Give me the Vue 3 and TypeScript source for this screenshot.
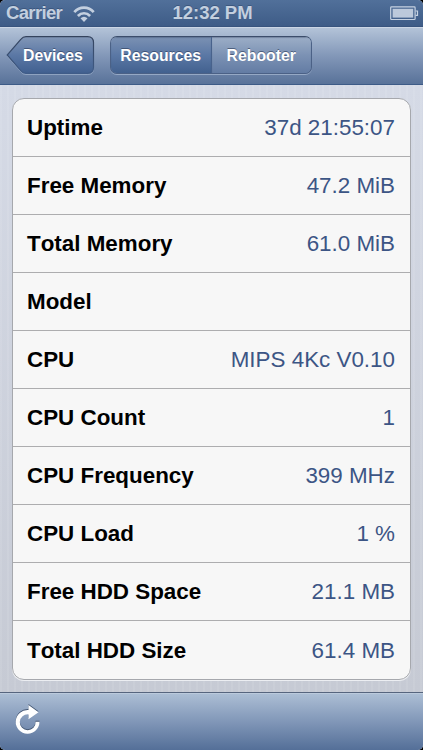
<script setup lang="ts">
import { ref } from 'vue'

interface Row {
  label: string
  value: string
}

const rows: Row[] = [
  { label: 'Uptime', value: '37d 21:55:07' },
  { label: 'Free Memory', value: '47.2 MiB' },
  { label: 'Total Memory', value: '61.0 MiB' },
  { label: 'Model', value: '' },
  { label: 'CPU', value: 'MIPS 4Kc V0.10' },
  { label: 'CPU Count', value: '1' },
  { label: 'CPU Frequency', value: '399 MHz' },
  { label: 'CPU Load', value: '1 %' },
  { label: 'Free HDD Space', value: '21.1 MB' },
  { label: 'Total HDD Size', value: '61.4 MB' },
]

const tabs = ['Resources', 'Rebooter']
const active = ref('Resources')
</script>

<template>
  <div class="screen">
    <header class="status">
      <div class="carrier">
        <span class="carrier-name">Carrier</span>
        <svg class="wifi" width="22" height="18" viewBox="0 0 22 18">
          <g fill="none" stroke="#c3cfdf" stroke-width="2.7">
            <path d="M1.3 7.1C6.6 1.1 15.4 1.1 20.7 7.1" />
            <path d="M4.9 11C8.400 7.300 13.600 7.300 17.100 11" />
          </g>
          <path d="M7.500 13.300Q11 10.200 14.500 13.300L11 17Z" fill="#c3cfdf" />
        </svg>
      </div>
      <span class="clock">12:32 PM</span>
      <svg class="battery" width="29" height="15" viewBox="0 0 29 15">
        <rect x="0.700" y="0.900" width="24.400" height="12.600" rx="0.800" fill="none" stroke="#c6d2e2" stroke-width="1.200" />
        <rect x="2.600" y="2.800" width="20.600" height="8.800" fill="#bcc9db" />
        <path d="M25.500 5H27.500V9.400H25.500" fill="none" stroke="#c6d2e2" stroke-width="1.200" />
      </svg>
    </header>

    <nav class="navbar">
      <button class="back">
        <svg class="back-shape" width="89" height="41" viewBox="0 0 89 41">
          <defs>
            <linearGradient id="back-fill" x1="0" y1="0" x2="0" y2="1">
              <stop offset="0" stop-color="#8297b7" />
              <stop offset="0.500" stop-color="#5b78a5" />
              <stop offset="1" stop-color="#416090" />
            </linearGradient>
            <linearGradient id="back-edge" x1="0" y1="0" x2="0" y2="1">
              <stop offset="0" stop-color="#34435d" />
              <stop offset="1" stop-color="#405c88" />
            </linearGradient>
          </defs>
          <path d="M20 2H81.500Q87.500 2 87.500 8V32.500Q87.500 38.500 81.500 38.500H20Q17 38.500 15 36L1.500 20.300L15 4.500Q17 2 20 2Z" fill="none" stroke="#a9bad3" stroke-opacity="0.600" />
          <path d="M20 0.600H81.500Q87.500 0.600 87.500 6.600V31.300Q87.500 37.300 81.500 37.300H20Q17 37.300 15 34.800L1.200 19L15 3.100Q17 0.600 20 0.600Z" fill="url(#back-fill)" stroke="url(#back-edge)" stroke-width="1.200" />
        </svg>
        <span class="back-text">Devices</span>
      </button>
      <div class="segments">
        <button
          v-for="tab in tabs"
          :key="tab"
          class="segment"
          :class="{ active: tab === active }"
          @click="active = tab"
        >
          {{ tab }}
        </button>
      </div>
    </nav>

    <main class="content">
      <dl class="table">
        <div v-for="row in rows" :key="row.label" class="row">
          <dt>{{ row.label }}</dt>
          <dd>{{ row.value }}</dd>
        </div>
      </dl>
    </main>

    <footer class="toolbar">
      <button class="refresh" aria-label="Refresh">
        <svg width="28" height="34" viewBox="0 0 28 34">
          <path transform="translate(0 -1)" fill="#435673" d="M13.500 5.400V2L23.500 9.200L13.500 16.200V11.400A7.900 7.900 0 1 0 20.600 18.800H24.500A11.900 11.900 0 1 1 13.500 7Z" />
          <path d="M13.500 5.400V2L23.500 9.200L13.500 16.200V11.400A7.900 7.900 0 1 0 20.600 18.800H24.500A11.900 11.900 0 1 1 13.500 7Z" fill="#fff" />
        </svg>
      </button>
    </footer>
  </div>
</template>

<style>
body {
  background: #000;
}
</style>

<style scoped>
.screen {
  width: 423px;
  height: 750px;
  display: flex;
  flex-direction: column;
  overflow: hidden;
  border-radius: 5px;
  font-family: 'Liberation Sans', Arial, sans-serif;
  font-kerning: none;
  background: #d4d9e4;
}
button {
  border: 0;
  padding: 0;
  background: none;
  font: bold 15.8px/20px 'Liberation Sans', Arial, sans-serif;
  color: #fff;
  text-shadow: 0 -1px 0 rgba(40, 55, 85, 0.6);
}
.status {
  box-sizing: border-box;
  height: 27px;
  flex: none;
  display: grid;
  grid-template-columns: 1fr auto 1fr;
  align-items: center;
  padding: 0 4px 0 6px;
  background: linear-gradient(#51709a, #3e5c87);
  border-bottom: 1px solid #38547e;
  color: #c3cfdf;
  font-size: 18.5px;
  font-weight: bold;
  line-height: 26px;
  text-shadow: 0 -1px 0 rgba(35, 55, 90, 0.4);
}
.carrier {
  display: flex;
  align-items: center;
  gap: 11px;
}
.carrier-name {
  letter-spacing: -0.65px;
}
.wifi {
  margin-top: 2px;
}
.battery {
  justify-self: end;
}
.navbar {
  box-sizing: border-box;
  height: 58px;
  flex: none;
  display: flex;
  align-items: flex-start;
  gap: 15px;
  padding: 8px 0 0 6px;
  background: linear-gradient(#b3c3d8, #8297b8 50%, #587299);
  border-top: 1px solid #cbd6e5;
  border-bottom: 1px solid #3d5b87;
}
.back {
  display: grid;
  width: 89px;
  height: 41px;
}
.back-shape,
.back-text {
  grid-area: 1 / 1;
}
.back-text {
  padding: 10px 0 0 17px;
  text-align: left;
}
.segments {
  box-sizing: border-box;
  display: flex;
  width: 202px;
  height: 38px;
  border: 1px solid #4b6186;
  border-top-color: #3c4d6b;
  border-radius: 7px;
  overflow: hidden;
  box-shadow: 0 1px 0 rgba(180, 196, 220, 0.6);
}
.segment {
  flex: 1;
  padding-top: 1px;
  background: linear-gradient(#9caec7, #7c92b4 50%, #637ca4);
  box-shadow: inset 0 1px 1px rgba(50, 65, 95, 0.35);
}
.segment.active {
  background: linear-gradient(#7b91b3, #5b78a5 50%, #42618f);
  border-right: 1px solid #48628c;
}
.content {
  flex: 1;
  padding: 13px 12px 0;
  background:
    repeating-linear-gradient(90deg, rgba(255, 255, 255, 0.08) 0 2px, transparent 2px 7px),
    linear-gradient(#d5dae6, #c6cad4);
}
.table {
  box-sizing: border-box;
  height: 582px;
  margin: 0;
  display: grid;
  grid-template-rows: repeat(10, 1fr);
  background: #f7f7f7;
  border: 1px solid #a6a8ad;
  border-radius: 12px;
  box-shadow: 0 1px 0 #eceef2;
  overflow: hidden;
}
.row {
  display: flex;
  align-items: center;
  justify-content: space-between;
  padding: 1px 15px 0 14px;
  border-bottom: 1px solid #adadaf;
  font-size: 22.4px;
  line-height: 26px;
}
.row:last-child {
  border-bottom: 0;
}
dt {
  font-weight: bold;
  color: #000;
}
dd {
  margin: 0;
  color: #3c5585;
}
.toolbar {
  box-sizing: border-box;
  height: 58px;
  flex: none;
  display: flex;
  align-items: flex-start;
  padding: 10px 0 0 15px;
  background: linear-gradient(#adbfd5, #8197b8 50%, #546f98);
  border-top: 1px solid #56657e;
  box-shadow: inset 0 1px 0 #bbcadc;
}
.refresh {
  width: 28px;
  height: 34px;
}
</style>
